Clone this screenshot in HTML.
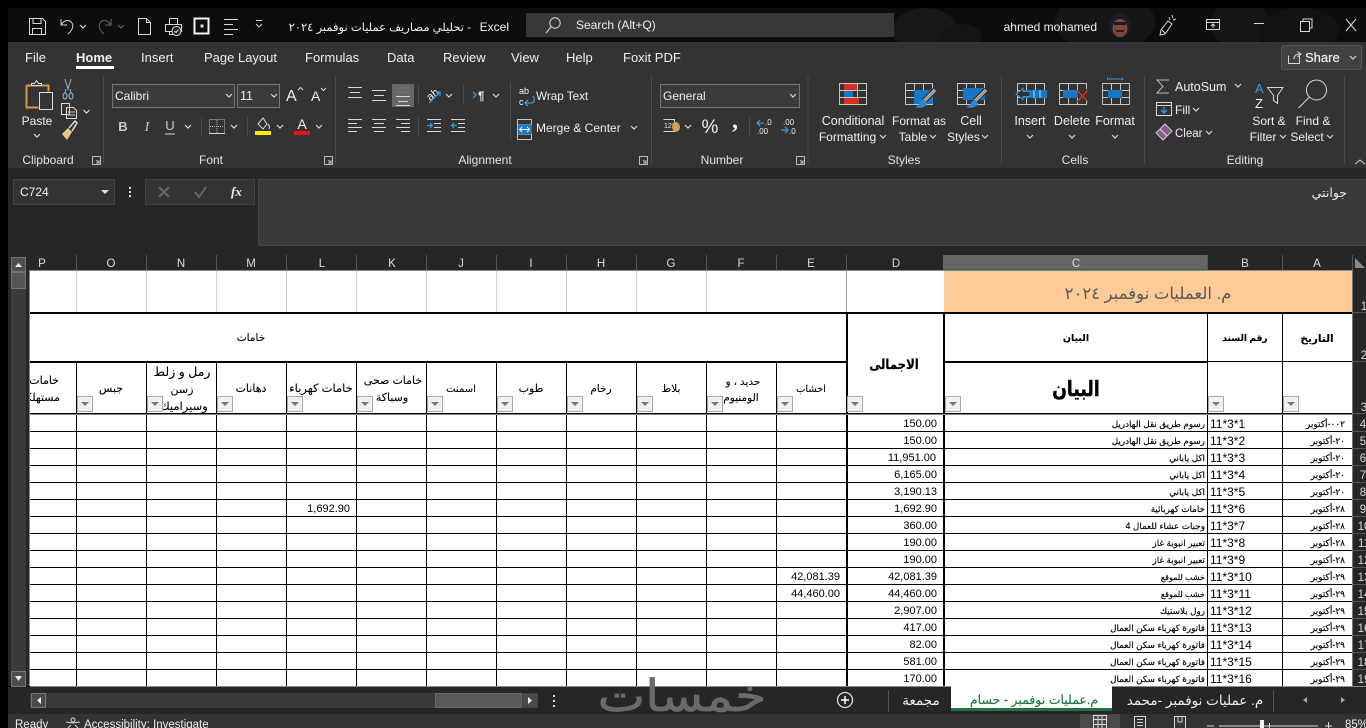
<!DOCTYPE html>
<html lang="en"><head><meta charset="utf-8"><title>Excel</title>
<style>
html,body{margin:0;padding:0;background:#000;width:1366px;height:728px;overflow:hidden}
svg{display:block;position:absolute;left:0;top:0}
text{font-family:"Liberation Sans","DejaVu Sans",sans-serif;font-size:12.5px;fill:#f0f0f0}
.m{text-anchor:middle}
.e{text-anchor:end}
.t{font-size:13px}
.l{font-size:12px;fill:#e4e4e4}
.h{font-size:11.5px;fill:#dcdcdc;text-anchor:middle}
.n{font-size:11.5px;fill:#dcdcdc;text-anchor:middle}
.v{font-size:11px;fill:#000;text-anchor:end}
.b{font-size:12px;fill:#000}
.c{font-size:8.8px;fill:#000;text-anchor:start;direction:rtl;stroke:#000;stroke-width:.15}
.a{font-size:9px;fill:#000;text-anchor:start;direction:rtl;stroke:#000;stroke-width:.15}
.g{font-size:11px;fill:#000;text-anchor:middle;stroke:#000;stroke-width:.1}
.i{fill:none;stroke:#d8d8d8;stroke-width:1}
.bl{fill:none;stroke:#3a96dd;stroke-width:1.3}
.ch{fill:none;stroke:#d8d8d8;stroke-width:1.2}
</style></head><body>
<svg width="1366" height="728" viewBox="0 0 1366 728" xmlns="http://www.w3.org/2000/svg">
<defs>
<path id="c" d="M0 0l3 3 3-3" class="ch"/>
<g id="f"><rect x=".5" y=".5" width="15" height="15" fill="#f1f1f1" stroke="#a8a8a8"/><path d="M4 6h8l-4 4z" fill="#777"/></g>
<g id="gr"><path d="M.5.5h27v21H.5zM.5 7.5h27M.5 14.500h27M9.500.5v21M18.500.5v21" fill="none" stroke="#c4c4c4"/></g>
<g id="br"><path d="M21 0l-11 11" stroke="#333" stroke-width="5.500" fill="none"/><path d="M21 0l-11 11" stroke="#cfcfcf" stroke-width="3" fill="none"/><path d="M20.500.5l-10.500 10.500" stroke="#777" stroke-width="1" fill="none"/><path d="M10 10c-4 0-3 5-9 7 5 2 12 0 12-4z" fill="#2f86d4"/></g>
<clipPath id="pc"><rect x="30" y="362" width="46" height="52"/></clipPath>
<clipPath id="nc"><rect x="147" y="362" width="69" height="52"/></clipPath>
</defs>

<!-- window base -->
<rect width="1366" height="728" fill="#000"/>
<rect x="8" y="8" width="1358" height="34" fill="#0d0d0d"/>
<ellipse cx="925" cy="30" rx="32" ry="22" fill="#181818"/><ellipse cx="960" cy="36" rx="22" ry="12" fill="#151515"/>
<ellipse cx="1105" cy="22" rx="50" ry="30" fill="#161616"/><ellipse cx="1240" cy="24" rx="30" ry="24" fill="#151515"/><ellipse cx="1300" cy="30" rx="40" ry="22" fill="#121212"/>
<rect x="0" y="0" width="1366" height="8" fill="#000"/>
<rect x="8" y="42" width="1358" height="126" fill="#333"/>
<rect x="8" y="168" width="1358" height="87" fill="#262626"/>
<rect x="8" y="255" width="1358" height="431" fill="#262626"/>

<!-- title bar -->
<g class="i" stroke="#e8e8e8">
<path d="M29.500 18.500h13l3 3v13h-16zM33 18.500v5h8v-5M32.500 34.500v-6h9v6" class="i"/>
<path d="M61 19v6h6M61 25c3-5 8-6 11-2 2 3 0 8-4 11" class="i"/>
<path d="M111 19v6h-6M111 25c-3-5-8-6-11-2-2 3 0 8 4 11" fill="none" stroke="#666" stroke-width="1"/>
<path d="M138.500 18.500h8l4 4v12h-12zM146.500 18.500v4h4" class="i"/>
<path d="M169.500 24.500v-6h8v6M165.500 24.500h16v7h-16zM169.500 31.500v3h8v-3" class="i"/>
<circle cx="176.500" cy="31" r="4.500" fill="#222" stroke="#ddd"/>
<path d="M174.500 31l1.500 1.500 2.500-3" class="i"/>
<rect x="194.500" y="18.500" width="14" height="15" fill="none" stroke="#f4f4f4" stroke-width="2"/><rect x="201" y="25" width="2" height="2" fill="#fff"/>
<path d="M224 19.500h14M224 24.500h9M224 29.500h14M224 34.500h9" class="i"/>
<path d="M256 20.500h6M256 24l3 3 3-3" class="i"/>
</g>
<use href="#c" x="80" y="25"/><use href="#c" x="118" y="25" opacity=".4"/>
<text x="509" y="31" class="e" style="font-size:12px">Excel</text>
<text x="471" y="31" class="e" style="font-size:11.500px">تحليلي مصاريف عمليات نوفمبر ٢٠٢٤  -</text>
<rect x="526" y="13" width="368" height="24" fill="#383838"/>
<circle cx="555" cy="23" r="5.200" class="i"/><path d="M551 27l-5 6" class="i"/>
<text x="576" y="29" style="font-size:12px">Search (Alt+Q)</text>
<text x="1097" y="31" class="e" style="font-size:12px">ahmed mohamed</text>
<ellipse cx="1120" cy="26" rx="11" ry="12" fill="#1c1c2c"/><ellipse cx="1120" cy="28" rx="7.500" ry="9" fill="#7a4a3a"/><rect x="1114" y="22" width="12" height="3" fill="#2a1616"/><rect x="1116" y="30" width="8" height="2" fill="#2f2020"/>
<path d="M1168 21l-7 9-1 5 5-1 7-10zM1162 30l3 3M1172 15l1 3M1176 19l-3 1M1169 17l1 3" class="i"/>
<path d="M1206.500 19.500h13v10h-13zM1206.500 22.500h13M1213 28v-4M1211 26l2-2 2 2" class="i"/>
<path d="M1254 23.500h10" class="i"/>
<path d="M1300.500 21.500h9v10h-9zM1303 21v-2h9v9h-2" class="i"/>
<path d="M1346 19l10 12M1356 19l-10 12" class="i"/>

<!-- tabs -->
<text x="25" y="62" class="t">File</text>
<text x="76" y="62" style="font-weight:bold;font-size:13px">Home</text>
<rect x="76" y="66" width="38" height="3" fill="#fff"/>
<text x="141" y="62" class="t">Insert</text>
<text x="204" y="62" class="t">Page Layout</text>
<text x="305" y="62" class="t">Formulas</text>
<text x="387" y="62" class="t">Data</text>
<text x="443" y="62" class="t">Review</text>
<text x="511" y="62" class="t">View</text>
<text x="566" y="62" class="t">Help</text>
<text x="623" y="62" class="t">Foxit PDF</text>
<rect x="1281.500" y="45.500" width="80" height="24" rx="2" fill="#414141" stroke="#555"/>
<path d="M1288.500 55.500v8h11v-8M1294 59c0-3 2-5 6-5M1297.500 51.500l3.500 2.500-3.500 3" class="i"/>
<text x="1305" y="62" style="font-size:13px;stroke:#f0f0f0;stroke-width:.2">Share</text>
<use href="#c" x="1350" y="56"/>

<!-- group separators -->
<path d="M103.500 76V164M335.500 76V164M651.500 76V164M808 76V164M1001.500 76V164M1144.500 76V164M1344.500 76V164" stroke="#4a4a4a"/>

<!-- clipboard -->
<path d="M26.500 85.500h22v6" fill="none" stroke="#d69a4a" stroke-width="2"/><path d="M26.500 85.500v22h12" fill="none" stroke="#d69a4a" stroke-width="2"/>
<path d="M31.500 85.500v-2h3l2-3 2 3h3v2z" fill="#333" stroke="#ddd"/>
<rect x="39.500" y="92.500" width="13" height="17" fill="#333" stroke="#ddd"/>
<path d="M65 79l3 10 3-10M65 93a2 3 0 1 0 .1 0M71 93a2 3 0 1 0 .1 0" fill="none" stroke="#8fbde0"/>
<path d="M66 89l-1 4M70 89l1 4" stroke="#8fbde0"/>
<path d="M61.500 103.500h8v11h-8zM66.500 107.500h7l3 3v8h-10z" fill="#333" stroke="#ddd"/><path d="M68 112h7M68 115h7" stroke="#ccc"/>
<use href="#c" x="83.500" y="110"/>
<path d="M62 134l6-6 4 4-5 8z" fill="#e3c98a"/><path d="M69 128l6-7 2 2-5 8" fill="none" stroke="#ddd" stroke-width="1.500"/>
<text x="37" y="125" class="m" style="font-size:12px">Paste</text>
<use href="#c" x="34" y="134"/>
<text x="48" y="164" class="m l">Clipboard</text>
<path d="M92.500 156.500h8v8h-8zM96 160l3 3M99 160v3h-3" fill="none" stroke="#bbb"/>

<!-- font -->
<rect x="112.500" y="84.500" width="122" height="23" fill="#3b3b3b" stroke="#777"/>
<text x="115" y="100" style="font-size:12px">Calibri</text>
<use href="#c" x="226" y="94"/>
<rect x="237.500" y="84.500" width="42" height="23" fill="#3b3b3b" stroke="#777"/>
<text x="240" y="100" style="font-size:12.500px">11</text>
<use href="#c" x="271" y="94"/>
<text x="286" y="101" style="font-size:16px">A</text><path d="M298 90l2.500-2.500L303 90" class="i"/>
<text x="311" y="101" style="font-size:14px">A</text><path d="M321 88l2.500 2.500L326 88" class="i"/>
<text x="123" y="131" class="m" style="font-weight:bold;font-size:13px;fill:#ccc">B</text>
<text x="147" y="131" class="m" style="font-style:italic;font-family:'Liberation Serif',serif;font-size:14px;fill:#ccc">I</text>
<text x="170" y="130" class="m" style="font-size:13px;fill:#ccc">U</text><path d="M165 134h10" class="i"/>
<use href="#c" x="185" y="125"/>
<path d="M201.500 117V137M247.500 117V137" stroke="#4a4a4a"/>
<path d="M209.500 119.500h15v14h-15zM217 120v13M210 126.500h14" fill="none" stroke="#bbb" stroke-dasharray="1 1"/><path d="M209 133.500h16" class="i"/>
<use href="#c" x="231" y="125"/>
<path d="M258 124l5-6 4 6-4 5zM268 124c1 1 2 3 1 5" class="i"/><rect x="255" y="131" width="16" height="4" fill="#ffeb00"/>
<use href="#c" x="277" y="125"/>
<text x="302" y="129" class="m" style="font-size:14px">A</text><rect x="294" y="131" width="16" height="4" fill="#ee1111"/>
<use href="#c" x="316" y="125"/>
<text x="211" y="164" class="m l">Font</text>
<path d="M324.500 156.500h8v8h-8zM328 160l3 3M331 160v3h-3" fill="none" stroke="#bbb"/>

<!-- alignment -->
<path d="M348 87.500h14M350 92.500h10M348 97.500h14" class="i"/>
<path d="M372 90.500h14M374 95.500h10M372 100.500h14" class="i"/>
<rect x="392" y="84" width="22" height="23" fill="#666"/>
<path d="M396 96.500h14M398 101.500h10M396 105.500h14" class="i"/><path d="M396 88h14M396 92h14" stroke="#888" stroke-dasharray="1 1"/>
<path d="M418.500 85V104M463.500 85V104M510.500 82V140M418.500 117V137" stroke="#4a4a4a"/>
<text x="433" y="98" class="m" style="font-size:11px" transform="rotate(-38 433 95)">ab</text><path d="M429 103l11-11M436 92h4v4" class="bl"/>
<use href="#c" x="446" y="94"/>
<text x="478" y="100" style="font-size:11.500px;font-weight:bold">¶</text><path d="M473 92l3 3-3 3" class="bl"/>
<use href="#c" x="493" y="94"/>
<text x="519" y="94" style="font-size:9px">ab</text><text x="519" y="105" style="font-size:9px">c</text>
<path d="M533 96c2 2 2 7-2 7h-6M528 100l-3 3 3 3" class="bl"/>
<text x="536" y="100" style="font-size:11.700px">Wrap Text</text>
<path d="M348 119.500h14M348 123.500h9M348 127.500h14M348 131.500h9" class="i"/>
<path d="M372 119.500h14M374 123.500h10M372 127.500h14M374 131.500h10" class="i"/>
<path d="M396 119.500h14M401 123.500h9M396 127.500h14M401 131.500h9" class="i"/>
<path d="M427 119.500h14M434 123.500h7M434 127.500h7M427 131.500h14" class="i"/><path d="M427 125.500h5M430 123l2.500 2.500-2.500 2.500" class="bl"/>
<path d="M451 119.500h14M458 123.500h7M458 127.500h7M451 131.500h14" class="i"/><path d="M457 125.500h-5M454 123l-2.500 2.500 2.500 2.500" class="bl"/>
<path d="M517.500 119.500h14v20h-14zM518 125h13M518 134h13" fill="none" stroke="#c4c4c4"/>
<rect x="518" y="125" width="14" height="9" fill="#1577c5"/>
<path d="M520 129.500h9M522 127l-2.500 2.500 2.500 2.500M527 127l2.500 2.500-2.500 2.500" fill="none" stroke="#fff"/>
<text x="536" y="132" style="font-size:12px">Merge &amp; Center</text>
<use href="#c" x="631" y="126"/>
<text x="485" y="164" class="m l">Alignment</text>
<path d="M639.500 156.500h8v8h-8zM643 160l3 3M646 160v3h-3" fill="none" stroke="#bbb"/>

<!-- number -->
<rect x="660.500" y="84.500" width="139" height="23" fill="#3b3b3b" stroke="#777"/>
<text x="663" y="100" style="font-size:12px">General</text>
<use href="#c" x="790" y="94"/>
<path d="M663.500 119.500h11v12h-11" class="i"/><text x="664" y="128" style="font-size:7px">123</text><ellipse cx="676" cy="127" rx="4" ry="5" fill="#c9a24a"/>
<use href="#c" x="685" y="125"/>
<text x="710" y="133" class="m" style="font-size:19px">%</text>
<text x="735" y="128" class="m" style="font-weight:bold;font-size:24px;font-family:'Liberation Serif',serif">,</text>
<path d="M749.500 117V137" stroke="#4a4a4a"/>
<path d="M764 123h-6M760 120l-3 3 3 3" class="bl"/>
<text x="765" y="125" style="font-size:8px">.0</text><text x="757" y="134" style="font-size:8px">.00</text>
<text x="783" y="125" style="font-size:8px">.00</text><text x="789" y="134" style="font-size:8px">.0</text>
<path d="M781 130h7M785 127l3 3-3 3" class="bl"/>
<text x="722" y="164" class="m l">Number</text>
<path d="M796.500 156.500h8v8h-8zM800 160l3 3M803 160v3h-3" fill="none" stroke="#bbb"/>

<!-- styles -->
<use href="#gr" x="839" y="83"/>
<rect x="844" y="84" width="13" height="6" fill="#d73023"/><rect x="844" y="91" width="9" height="6" fill="#1577c5"/><rect x="844" y="98" width="15" height="6" fill="#d73023"/>
<text x="853" y="125" class="m">Conditional</text>
<text x="847.500" y="141" class="m" style="font-size:12px">Formatting</text><use href="#c" x="880" y="135"/>
<use href="#gr" x="905" y="83"/>
<rect x="914" y="90" width="19" height="14" fill="#1577c5"/>
<use href="#br" x="914" y="90"/>
<text x="919" y="125" class="m" style="font-size:12px">Format as</text>
<text x="913" y="141" class="m" style="font-size:12px">Table</text><use href="#c" x="930" y="135"/>
<use href="#gr" x="957" y="83"/>
<rect x="963" y="88" width="22" height="12" fill="#1577c5"/>
<use href="#br" x="965" y="90"/>
<text x="971" y="125" class="m">Cell</text>
<text x="963.500" y="141" class="m" style="font-size:12px">Styles</text><use href="#c" x="982" y="135"/>
<text x="904" y="164" class="m l">Styles</text>

<!-- cells -->
<use href="#gr" x="1017" y="83"/>
<rect x="1023" y="90" width="24" height="8" fill="#1577c5"/><path d="M1034 90v8M1040 90v8" stroke="#c4e0f5"/>
<path d="M1030 91.500h-7v-3l-7 5.500 7 5.500v-3h7z" fill="#333" stroke="#3a96dd"/>
<text x="1030" y="125" class="m">Insert</text><use href="#c" x="1027" y="135"/>
<use href="#gr" x="1059" y="83"/>
<rect x="1063" y="90" width="15" height="8" fill="#1577c5"/>
<rect x="1078" y="89" width="10" height="11" fill="#333"/>
<path d="M1077 90l11 12M1088 90l-11 12" stroke="#d73023" stroke-width="1.300" fill="none"/>
<text x="1072" y="125" class="m">Delete</text><use href="#c" x="1069" y="135"/>
<use href="#gr" x="1102" y="83"/>
<rect x="1108" y="90" width="14" height="8" fill="#1577c5"/>
<path d="M1107.500 77.500v3M1122.500 77.500v3M1107 79h15" stroke="#3a96dd" fill="none"/>
<text x="1115" y="125" class="m">Format</text><use href="#c" x="1112" y="135"/>
<text x="1075" y="164" class="m l">Cells</text>

<!-- editing -->
<path d="M1169 80h-12l6 6.500-6 6.500h12" fill="none" stroke="#bdbdbd"/>
<text x="1175" y="91">AutoSum</text><use href="#c" x="1235" y="84"/>
<path d="M1156.500 102.500h15v13h-15zM1157 105.500h14" class="i"/><path d="M1164 107v6M1161 110l3 3 3-3" class="bl"/>
<text x="1175" y="114" style="font-size:12px">Fill</text><use href="#c" x="1193" y="108"/>
<path d="M1156 133l9-9 7 7-9 9z" fill="#8a5a86" stroke="#ccc"/><path d="M1160 129l7 7" stroke="#ddd"/>
<text x="1175" y="137" style="font-size:11.500px">Clear</text><use href="#c" x="1206" y="131"/>
<text x="1255" y="93" style="font-size:13px;fill:#3a96dd">A</text>
<text x="1255" y="108" style="font-size:13px">Z</text>
<path d="M1267.500 87.500h15.500l-5.500 8v8l-4-3v-5z" class="i"/>
<circle cx="1316.500" cy="90" r="10" class="i"/><path d="M1309.500 97l-11 11" class="i"/>
<text x="1269" y="125" class="m" style="font-size:12px">Sort &amp;</text>
<text x="1263" y="141" class="m" style="font-size:12px">Filter</text><use href="#c" x="1280" y="135"/>
<text x="1313" y="125" class="m" style="font-size:12px">Find &amp;</text>
<text x="1307" y="141" class="m" style="font-size:12px">Select</text><use href="#c" x="1327" y="135"/>
<text x="1245" y="164" class="m l">Editing</text>
<path d="M1355 164l5-4 5 4" class="i"/>

<!-- formula bar -->
<rect x="13.500" y="179.500" width="101" height="25" fill="#333" stroke="#444"/>
<text x="20" y="196" style="font-size:12px">C724</text>
<path d="M101 190h8l-4 4z" fill="#ddd"/>
<path d="M130 187v2M130 191v2M130 195v2" stroke="#ddd" stroke-width="2"/>
<rect x="145.500" y="179.500" width="109" height="25" fill="#333" stroke="#444"/>
<path d="M159 187l10 10M169 187l-10 10" stroke="#666" stroke-width="2"/>
<path d="M195 192l4 5 7-10" fill="none" stroke="#666" stroke-width="2"/>
<text x="231" y="196" style="font-family:'Liberation Serif',serif;font-style:italic;font-weight:bold;font-size:13px">fx</text>
<rect x="258.500" y="179.500" width="1108" height="66" fill="#393939" stroke="#444"/>
<text x="1347" y="197" class="e" style="font-size:12.500px;fill:#eee">جوانتي</text>

<!-- column headers -->
<rect x="943" y="255" width="264" height="15" fill="#666"/><rect x="943" y="269" width="264" height="2" fill="#217346"/>
<path d="M76.500 255v15M146.500 255v15M216.500 255v15M286.500 255v15M356.500 255v15M426.500 255v15M496.500 255v15M566.500 255v15M636.500 255v15M706.500 255v15M776.500 255v15M846.500 255v15M1207.500 255v15M1282.500 255v15M1352.500 255v15" stroke="#555"/>
<text x="42" y="267" class="h">P</text><text x="111" y="267" class="h">O</text><text x="181" y="267" class="h">N</text><text x="251" y="267" class="h">M</text><text x="322" y="267" class="h">L</text><text x="392" y="267" class="h">K</text><text x="461" y="267" class="h">J</text><text x="531" y="267" class="h">I</text><text x="601" y="267" class="h">H</text><text x="671" y="267" class="h">G</text><text x="741" y="267" class="h">F</text><text x="811" y="267" class="h">E</text><text x="896" y="267" class="h">D</text><text x="1076" y="267" class="h">C</text><text x="1245" y="267" class="h">B</text><text x="1317" y="267" class="h">A</text>
<path d="M1355 268v-10l10 10z" fill="#8a8a8a"/>

<!-- sheet -->
<rect x="29" y="270" width="1323" height="416" fill="#fff"/>
<path d="M29.500 270V686M29 270.500h1323" stroke="#8a8a8a" fill="none"/>
<rect x="944" y="271" width="408" height="41" fill="#fdca98"/>
<path d="M76.500 271v41M146.500 271v41M216.500 271v41M286.500 271v41M356.500 271v41M426.500 271v41M496.500 271v41M566.500 271v41M636.500 271v41M706.500 271v41" stroke="#d0d0d0"/>
<path d="M846.500 271v41" stroke="#9a9a9a"/>
<!-- thick header lines -->
<path d="M30 313H1352" stroke="#000" stroke-width="2"/>
<path d="M30 362H846" stroke="#000" stroke-width="2"/>
<path d="M944 362H1207" stroke="#000" stroke-width="2"/>
<path d="M1207 361.500H1352" stroke="#000"/>
<path d="M30 413.500H1352" stroke="#000"/>
<path d="M30 414.500H1352" stroke="#888"/>
<path d="M76.500 362v52M146.500 362v52M216.500 362v52M286.500 362v52M356.500 362v52M426.500 362v52M496.500 362v52M566.500 362v52M636.500 362v52M706.500 362v52M776.500 362v52" stroke="#000"/>
<path d="M847 313V414M944 313V414" stroke="#000" stroke-width="2"/>
<path d="M1207.500 313V414M1282.500 313V414" stroke="#000"/>
<!-- data lines -->
<path d="M30 431.500H1352M30 448.500H1352M30 465.500H1352M30 482.500H1352M30 499.500H1352M30 516.500H1352M30 533.500H1352M30 550.500H1352M30 567.500H1352M30 584.500H1352M30 601.500H1352M30 618.500H1352M30 635.500H1352M30 652.500H1352M30 669.500H1352" stroke="#000"/>
<path d="M76.500 415v271M146.500 415v271M216.500 415v271M286.500 415v271M356.500 415v271M426.500 415v271M496.500 415v271M566.500 415v271M636.500 415v271M706.500 415v271M776.500 415v271M1207.500 415v271M1282.500 415v271" stroke="#000"/>
<path d="M847 415V686M944 415V686" stroke="#000" stroke-width="2"/>
<path d="M30 686.500H1366" stroke="#8a8a8a"/>

<!-- title + heads -->
<text x="1148" y="299" class="m" style="font-size:16.500px;fill:#595959">م. العمليات نوفمبر ٢٠٢٤</text>
<text x="251" y="341" class="g" style="font-size:10.500px">خامات</text>
<text x="1076" y="341" class="g" style="font-weight:bold;font-size:9.500px">البيان</text>
<text x="1245" y="341" class="g" style="font-weight:bold;font-size:9px">رقم السند</text>
<text x="1317" y="342" class="g" style="font-weight:bold;font-size:10.500px">التاريخ</text>
<text x="0" y="0" class="m" transform="translate(894 369) scale(.9 1.05)" style="font-size:13px;font-weight:bold;fill:#000;stroke:#000;stroke-width:.2">الاجمالى</text>
<text x="0" y="0" class="m" transform="translate(1076 396) scale(.82 1)" style="font-size:21px;font-weight:bold;fill:#000;stroke:#000;stroke-width:.4">البيان</text>
<g clip-path="url(#pc)"><text x="59" y="384" class="g" style="text-anchor:end">خامات</text><text x="60" y="401" class="g" style="text-anchor:end">مستهلكة</text></g>
<text x="111" y="392" class="g">جبس</text>
<text x="182" y="376" class="g" style="font-size:12.500px">رمل و زلط</text><text x="182" y="393" class="g">زسن</text>
<g clip-path="url(#nc)"><text x="184" y="410" class="g" style="font-size:11.500px">وسيراميك</text></g>
<text x="251" y="392" class="g">دهانات</text>
<text x="321" y="392" class="g" style="font-size:11.500px">خامات كهرباء</text>
<text x="393" y="384" class="g">خامات صحى</text><text x="392" y="401" class="g">وسباكة</text>
<text x="461" y="392" class="g" style="font-size:10px">اسمنت</text>
<text x="531" y="392" class="g">طوب</text>
<text x="601" y="392" class="g" style="font-size:10.500px">رخام</text>
<text x="671" y="392" class="g" style="font-size:10.500px">بلاط</text>
<text x="743" y="385" class="g" style="font-size:10.500px">حديد ، و</text><text x="741" y="401" class="g" style="font-size:10.500px">الومنيوم</text>
<text x="811" y="392" class="g" style="font-size:9.800px">اخشاب</text>
<!-- filter buttons -->
<use href="#f" x="77" y="396"/><use href="#f" x="147" y="396"/><use href="#f" x="217" y="396"/><use href="#f" x="287" y="396"/><use href="#f" x="357" y="396"/><use href="#f" x="427" y="396"/><use href="#f" x="497" y="396"/><use href="#f" x="567" y="396"/><use href="#f" x="637" y="396"/><use href="#f" x="707" y="396"/><use href="#f" x="777" y="396"/><use href="#f" x="847" y="396"/><use href="#f" x="945" y="396"/><use href="#f" x="1208" y="396"/><use href="#f" x="1283" y="396"/>

<!-- data -->
<text x="1345" y="427" class="a">٠٠٢-أكتوبر</text><text x="1210" y="428" class="b">11*3*1</text><text x="1205" y="427" class="c">رسوم طريق نقل الهادريل</text><text x="937" y="427" class="v">150.00</text>
<text x="1345" y="444" class="a">٢٠-أكتوبر</text><text x="1210" y="445" class="b">11*3*2</text><text x="1205" y="444" class="c">رسوم طريق نقل الهادريل</text><text x="937" y="444" class="v">150.00</text>
<text x="1345" y="461" class="a">٢٠-أكتوبر</text><text x="1210" y="462" class="b">11*3*3</text><text x="1205" y="461" class="c">اكل ياباني</text><text x="936" y="461" class="v">11,951.00</text>
<text x="1345" y="478" class="a">٢٠-أكتوبر</text><text x="1210" y="479" class="b">11*3*4</text><text x="1205" y="478" class="c">اكل ياباني</text><text x="937" y="478" class="v">6,165.00</text>
<text x="1345" y="495" class="a">٢٠-أكتوبر</text><text x="1210" y="496" class="b">11*3*5</text><text x="1205" y="495" class="c">اكل ياباني</text><text x="937" y="495" class="v">3,190.13</text>
<text x="1345" y="512" class="a">٢٨-أكتوبر</text><text x="1210" y="513" class="b">11*3*6</text><text x="1205" y="512" class="c">خامات كهربائية</text><text x="937" y="512" class="v">1,692.90</text><text x="350" y="512" class="v">1,692.90</text>
<text x="1345" y="529" class="a">٢٨-أكتوبر</text><text x="1210" y="530" class="b">11*3*7</text><text x="1205" y="529" class="c">وجبات عشاء للعمال 4</text><text x="937" y="529" class="v">360.00</text>
<text x="1345" y="546" class="a">٢٨-أكتوبر</text><text x="1210" y="547" class="b">11*3*8</text><text x="1205" y="546" class="c">تعبير انبوبة غاز</text><text x="937" y="546" class="v">190.00</text>
<text x="1345" y="563" class="a">٢٨-أكتوبر</text><text x="1210" y="564" class="b">11*3*9</text><text x="1205" y="563" class="c">تعبير انبوبة غاز</text><text x="937" y="563" class="v">190.00</text>
<text x="1345" y="580" class="a">٢٩-أكتوبر</text><text x="1210" y="581" class="b">11*3*10</text><text x="1205" y="580" class="c" style="font-size:8px">خشب للموقع</text><text x="937" y="580" class="v">42,081.39</text><text x="840" y="580" class="v">42,081.39</text>
<text x="1345" y="597" class="a">٢٩-أكتوبر</text><text x="1210" y="598" class="b">11*3*11</text><text x="1205" y="597" class="c" style="font-size:8px">خشب للموقع</text><text x="937" y="597" class="v">44,460.00</text><text x="840" y="597" class="v">44,460.00</text>
<text x="1345" y="614" class="a">٢٩-أكتوبر</text><text x="1210" y="615" class="b">11*3*12</text><text x="1205" y="614" class="c">رول بلاستيك</text><text x="937" y="614" class="v">2,907.00</text>
<text x="1345" y="631" class="a">٢٩-أكتوبر</text><text x="1210" y="632" class="b">11*3*13</text><text x="1205" y="631" class="c">فاتورة كهرباء سكن العمال</text><text x="937" y="631" class="v">417.00</text>
<text x="1345" y="648" class="a">٢٩-أكتوبر</text><text x="1210" y="649" class="b">11*3*14</text><text x="1205" y="648" class="c">فاتورة كهرباء سكن العمال</text><text x="937" y="648" class="v">82.00</text>
<text x="1345" y="665" class="a">٢٩-أكتوبر</text><text x="1210" y="666" class="b">11*3*15</text><text x="1205" y="665" class="c">فاتورة كهرباء سكن العمال</text><text x="937" y="665" class="v">581.00</text>
<text x="1345" y="682" class="a">٢٩-أكتوبر</text><text x="1210" y="683" class="b">11*3*16</text><text x="1205" y="682" class="c">فاتورة كهرباء سكن العمال</text><text x="937" y="682" class="v">170.00</text>

<!-- row headers -->
<path d="M1352.500 270V686" stroke="#777"/>
<path d="M1353 312.500h13M1353 361.500h13M1353 413.500h13M1353 431.500h13M1353 448.500h13M1353 465.500h13M1353 482.500h13M1353 499.500h13M1353 516.500h13M1353 533.500h13M1353 550.500h13M1353 567.500h13M1353 584.500h13M1353 601.500h13M1353 618.500h13M1353 635.500h13M1353 652.500h13M1353 669.500h13" stroke="#555"/>
<text x="1364" y="310" class="n">1</text><text x="1364" y="359" class="n">2</text><text x="1364" y="411" class="n">3</text><text x="1363" y="428" class="n">4</text><text x="1363" y="445" class="n">5</text><text x="1363" y="462" class="n">6</text><text x="1363" y="479" class="n">7</text><text x="1363" y="496" class="n">8</text><text x="1363" y="513" class="n">9</text><text x="1364" y="530" class="n">10</text><text x="1364" y="547" class="n">11</text><text x="1364" y="564" class="n">12</text><text x="1364" y="581" class="n">13</text><text x="1364" y="598" class="n">14</text><text x="1364" y="615" class="n">15</text><text x="1364" y="632" class="n">16</text><text x="1364" y="649" class="n">17</text><text x="1364" y="666" class="n">18</text><text x="1364" y="683" class="n">19</text>

<!-- vertical scrollbar -->
<rect x="11" y="257" width="15" height="429" fill="#3a3a3a"/>
<rect x="11.500" y="257.500" width="14" height="14" fill="#4e4e4e" stroke="#777"/><path d="M15 267h7l-3.500-4z" fill="#eee"/>
<rect x="11.500" y="272.500" width="14" height="16" fill="#555" stroke="#777"/>
<rect x="11.500" y="671.500" width="14" height="15" fill="#4e4e4e" stroke="#777"/><path d="M15 676h7l-3.500 5z" fill="#eee"/>

<!-- tab bar -->
<rect x="8" y="687" width="1358" height="27" fill="#262626"/>
<rect x="30" y="693" width="508" height="15" fill="#3a3a3a"/>
<rect x="31.500" y="693.500" width="14" height="14" fill="#4a4a4a" stroke="#777"/><path d="M41 697v7l-4-3.500z" fill="#eee"/>
<rect x="435.500" y="693.500" width="86" height="14" fill="#5a5a5a" stroke="#666"/>
<rect x="522.500" y="693.500" width="15" height="14" fill="#4a4a4a"/><path d="M528 697v7l4-3.500z" fill="#eee"/>
<path d="M554 695v2M554 700v2M554 705v2" stroke="#ddd" stroke-width="2"/>
<circle cx="845" cy="700" r="7.500" fill="none" stroke="#ddd" stroke-width="1.300"/><path d="M841 700h8M845 696v8" stroke="#fff" stroke-width="1.500"/>
<path d="M888.500 690v22M1273.500 690v22" stroke="#555"/>
<text x="921" y="705" class="m" style="font-size:13.500px">مجمعة</text>
<rect x="951" y="686" width="161" height="25" fill="#fff"/>
<rect x="951" y="708" width="161" height="3" fill="#217346"/>
<text x="1034" y="704" class="m" style="font-size:12.500px;fill:#217346;stroke:#217346;stroke-width:.15">م.عمليات نوفمبر - حسام</text>
<text x="1195" y="705" class="m" style="font-size:13.500px">م. عمليات نوفمبر -محمد</text>
<path d="M1307 697v6l-4-3zM1341 697v6l4-3z" fill="#aaa"/>

<!-- watermark -->
<text x="0" y="0" class="m" transform="translate(682 711) scale(1.15 1)" style="font-size:44px;fill:#6a6a6a;stroke:#6a6a6a;stroke-width:.7">خمسات</text>

<!-- status bar -->
<rect x="8" y="714" width="1358" height="14" fill="#333"/>
<text x="15" y="728" style="font-size:11.500px">Ready</text>
<circle cx="73" cy="720" r="2" class="i"/><path d="M66 722l7 1 7-1M71 725l-3 3M75 725l3 3" class="i"/>
<text x="84" y="728" style="font-size:11.500px">Accessibility: Investigate</text>
<rect x="1080" y="714" width="40" height="14" fill="#4a4a4a"/>
<path d="M1093.500 719.500h13M1093.500 724.500h13M1093.500 715.500h13v13h-13zM1098 715v13M1102 715v13" class="i"/>
<path d="M1134.500 716.500h11v12h-11zM1137 719.500h6M1137 722.500h6M1137 725.500h6" class="i"/>
<path d="M1174.500 716.500h11v12h-11zM1178 716v6h4v-6" class="i"/>
<path d="M1207 726h7M1219 726h99M1325 726h7M1328.500 722v8" stroke="#ddd" fill="none"/>
<rect x="1260" y="720" width="4" height="8" fill="#eee"/><path d="M1269.500 723v5" stroke="#ddd"/>
<text x="1345" y="728" style="font-size:11.500px">85%</text>
</svg>
</body></html>
